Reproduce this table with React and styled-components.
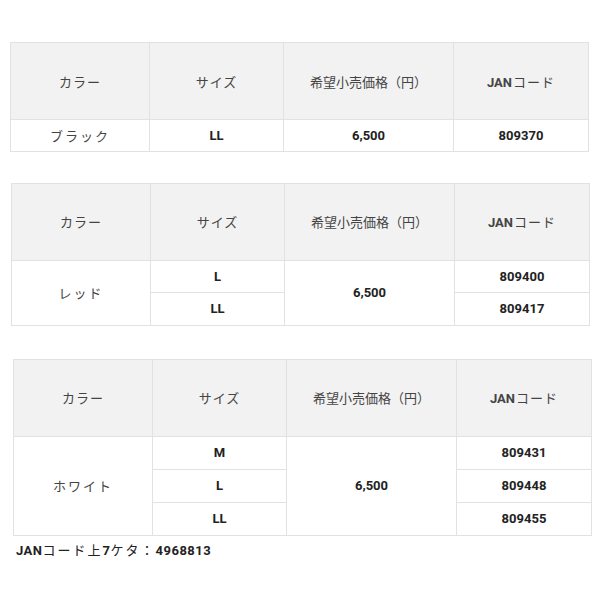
import React from 'react';
import styled, { createGlobalStyle } from 'styled-components';

const GlobalStyle = createGlobalStyle`
  body {
    margin: 0;
    background: #fff;
    font-family: Roboto, "Noto Sans CJK JP", sans-serif;
    color: #333;
  }
`;

const Page = styled.div`
  width: 600px;
  padding-top: 42px;
  display: flex;
  flex-direction: column;
`;

const SpecTable = styled.table`
  border-collapse: collapse;
  width: 578px;
  margin-left: ${p => p.shift}px;
  margin-bottom: ${p => p.gap}px;
  table-layout: fixed;
`;

const HeadCell = styled.th`
  background: #f2f2f2;
  border: 1px solid #e2e2e2;
  height: 76px;
  padding: 0;
  font-family: "Noto Sans CJK JP", sans-serif;
  font-weight: 400;
  font-size: 13px;
  color: #444;
  letter-spacing: ${p => (p.kana ? '1px' : '0')};
  text-align: center;
`;

const Latin = styled.span`
  font-family: Roboto, sans-serif;
  font-weight: 700;
  letter-spacing: 0;
  margin-right: 1px;
`;

const Cell = styled.td`
  border: 1px solid #e2e2e2;
  height: ${p => p.h}px;
  padding: 0;
  text-align: center;
  font-size: 13px;
  color: ${p => (p.kana ? '#444' : '#222')};
  font-family: ${p => (p.kana ? '"Noto Sans CJK JP", sans-serif' : 'Roboto, sans-serif')};
  font-weight: ${p => (p.kana ? 400 : 700)};
  letter-spacing: ${p => (p.kana ? '2px' : '0')};
`;

const Note = styled.p`
  margin: 4px 0 0 16px;
  font-family: Roboto, "Noto Sans CJK JP", sans-serif;
  font-weight: 700;
  font-size: 13px;
  color: #222;
  letter-spacing: 0.5px;
`;

const NoteKana = styled.span`
  font-family: "Noto Sans CJK JP", sans-serif;
  font-weight: 400;
  letter-spacing: 2px;
`;

const Cols = () => (
  <colgroup>
    <col style={{ width: '139px' }} />
    <col style={{ width: '134px' }} />
    <col style={{ width: '170px' }} />
    <col style={{ width: '135px' }} />
  </colgroup>
);

const Header = () => (
  <thead>
    <tr>
      <HeadCell kana>カラー</HeadCell>
      <HeadCell kana>サイズ</HeadCell>
      <HeadCell>希望小売価格（円）</HeadCell>
      <HeadCell kana>
        <Latin>JAN</Latin>コード
      </HeadCell>
    </tr>
  </thead>
);

const products = [
  { color: 'ブラック', price: '6,500', items: [['LL', '809370']], shift: 10, gap: 31, h: 30.5 },
  { color: 'レッド', price: '6,500', items: [['L', '809400'], ['LL', '809417']], shift: 11, gap: 33, h: 31.5 },
  {
    color: 'ホワイト',
    price: '6,500',
    items: [['M', '809431'], ['L', '809448'], ['LL', '809455']],
    shift: 13,
    gap: 0,
    h: 32,
  },
];

const App = () => (
  <Page>
    <GlobalStyle />
    {products.map(p => (
      <SpecTable key={p.color} shift={p.shift} gap={p.gap}>
        <Cols />
        <Header />
        <tbody>
          {p.items.map(([size, jan], i) => (
            <tr key={size}>
              {i === 0 && (
                <Cell kana h={p.h} rowSpan={p.items.length}>
                  {p.color}
                </Cell>
              )}
              <Cell h={p.h}>{size}</Cell>
              {i === 0 && (
                <Cell h={p.h} rowSpan={p.items.length}>
                  {p.price}
                </Cell>
              )}
              <Cell h={p.h}>{jan}</Cell>
            </tr>
          ))}
        </tbody>
      </SpecTable>
    ))}
    <Note>
      JAN<NoteKana>コード上</NoteKana>7<NoteKana>ケタ：</NoteKana>4968813
    </Note>
  </Page>
);

export default App;
